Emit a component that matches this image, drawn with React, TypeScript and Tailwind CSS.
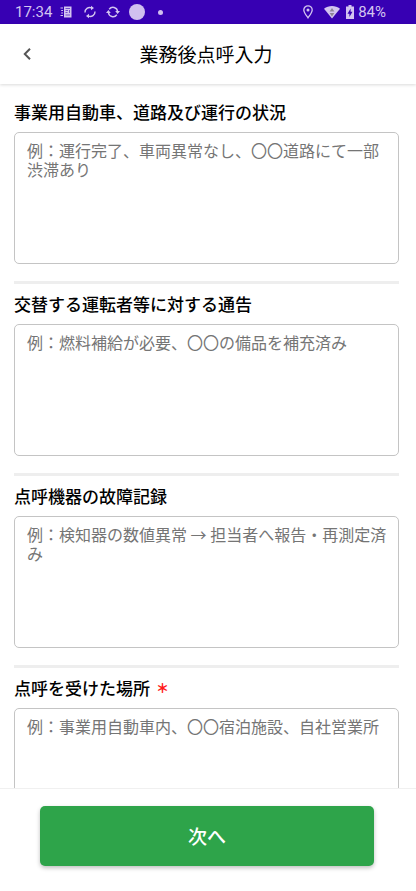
import React from "react";

type Field = {
  id: string;
  label: string;
  placeholder: string;
  required?: boolean;
};

const fields: Field[] = [
  {
    id: "condition",
    label: "事業用自動車、道路及び運行の状況",
    placeholder: "例：運行完了、車両異常なし、〇〇道路にて一部渋滞あり",
  },
  {
    id: "handover",
    label: "交替する運転者等に対する通告",
    placeholder: "例：燃料補給が必要、〇〇の備品を補充済み",
  },
  {
    id: "failure",
    label: "点呼機器の故障記録",
    placeholder: "例：検知器の数値異常 → 担当者へ報告・再測定済み",
  },
  {
    id: "place",
    label: "点呼を受けた場所",
    placeholder: "例：事業用自動車内、〇〇宿泊施設、自社営業所",
    required: true,
  },
];

const StatusBar: React.FC = () => (
  <div className="flex h-6 shrink-0 items-center bg-[#3700b3] pr-[30px] pl-[15px] font-[Roboto,sans-serif] text-[15px] text-[#d3c4f0]">
    <span>17:34</span>
    <svg className="ml-2 h-3 w-3" viewBox="0 0 12 12" fill="currentColor">
      <path d="M4 .5h7.500v11H4zM.5 1.500H3v1H.5zM1.200 4H3v1H1.200zM1.200 6.500H3v1H1.200zM.5 9H3v1H.5z" />
      <path d="M5.500 2.500H10M5.500 4.500H8M5.500 6.500H7.500M5.500 9H10M9.500 4v3" stroke="#3700b3" strokeWidth=".6" />
    </svg>
    <div className="ml-[11px] flex items-center gap-[9px]">
      {/* Sync, arrows at the right and left ends */}
      <svg className="h-[14px] w-[14px]" viewBox="0 0 14 14" fill="none" stroke="currentColor" strokeWidth="1.400">
        <path d="M2 7.500A4.700 4.700 0 0 1 8.500 2.900M12 6.500A4.700 4.700 0 0 1 5.500 11.100" />
        <path d="M8 .8v4.400L11 3zM6 13.200V8.800L3 11z" fill="currentColor" stroke="none" />
      </svg>
      <svg className="h-[14px] w-[14px]" viewBox="0 0 14 14" fill="none" stroke="currentColor" strokeWidth="1.400">
        <path d="M3.200 4.200A4.700 4.700 0 0 1 11.600 6.500M10.800 9.800A4.700 4.700 0 0 1 2.400 7.500" />
        <path d="M9.200 6h4.800l-2.400 3zM0 8h4.800L2.400 5z" fill="currentColor" stroke="none" />
      </svg>
      <span className="h-4 w-4 rounded-full bg-[#d0bfef]" />
    </div>
    <span className="ml-[13px] h-[5px] w-[5px] rounded-full bg-[#d0bfef]" />

    <div className="ml-auto flex items-center">
      <svg className="h-[14px] w-[10px]" viewBox="0 0 10 14" fill="none" stroke="currentColor" strokeWidth="1.300">
        <path d="M5 12.800C3 10 .8 7.500.8 5a4.200 4.200 0 0 1 8.400 0C9.200 7.500 7 10 5 12.800z" />
        <circle cx="5" cy="5" r="1.500" fill="currentColor" stroke="none" />
      </svg>
      <svg className="ml-[11px] h-[14px] w-4" viewBox="0 0 16 14">
        <path d="M0 3.800C4.500 0 11.500 0 16 3.800L8 13.500z" fill="currentColor" />
        <path d="M8 3l2.400 3.500H5.600zM8 11.500L5.600 8h4.800z" fill="#8d8495" />
      </svg>
      <svg className="ml-[6px] h-[14px] w-2" viewBox="0 0 8 14">
        <path d="M2.500 0h3v1.500H8V14H0V1.500h2.500z" fill="currentColor" />
        <path d="M4.600 3.500v3.300h1.900L3.400 12V8.700H1.500z" fill="#3700b3" />
      </svg>
      <span className="ml-1">84%</span>
    </div>
  </div>
);

const App: React.FC = () => {
  return (
    <div className="flex h-screen flex-col bg-white font-['Noto_Sans_CJK_JP',sans-serif] text-black">
      <StatusBar />

      {/* Header */}
      <header className="z-10 grid h-[60px] shrink-0 grid-cols-[48px_1fr_48px] items-center bg-white pr-1 shadow-[0_1px_3px_rgba(0,0,0,0.15)]">
        <button type="button" aria-label="戻る" className="flex h-full items-center justify-center pl-[6px]">
          <svg
            className="h-3 w-2"
            viewBox="0 0 8 12"
            fill="none"
            stroke="#555555"
            strokeWidth="2"
          >
            <path d="M7 .8L1.800 6 7 11.200" />
          </svg>
        </button>
        <h1 className="text-center text-[19px] leading-7">業務後点呼入力</h1>
      </header>

      {/* Form */}
      <main className="min-h-0 flex-1 overflow-y-auto pt-4 pr-[17px] pl-[14px] [scrollbar-width:none]">
        <form id="tenko">
          {fields.map((field) => (
            <div
              key={field.id}
              className="mb-2 border-b-[3px] border-[#eeeeee] pb-[17px] last:border-b-0"
            >
              <label htmlFor={field.id} className="mb-2 flex h-6 items-center text-[17px] leading-6 font-medium">
                {field.label}
                {field.required && <span className="ml-[6px] text-[13px] font-black text-[#ff1a1a]">＊</span>}
              </label>
              <textarea
                id={field.id}
                required={field.required}
                placeholder={field.placeholder}
                className="block h-[132px] w-full resize-none rounded-[5px] border border-[#c4c4c4] py-2 pr-2 pl-3 text-base leading-[19px] placeholder:text-[#757575]"
              />
            </div>
          ))}
        </form>
      </main>

      {/* Footer */}
      <footer className="shrink-0 border-t border-[#f0f0f0] bg-white pt-[17px] pr-[42px] pb-[25px] pl-10">
        <button
          type="submit"
          form="tenko"
          className="h-[60px] w-full rounded-[5px] bg-[#2ea44a] text-[19px] font-medium text-white shadow-[0_2px_4px_rgba(0,0,0,0.25)]"
        >
          次へ
        </button>
      </footer>
    </div>
  );
};

export default App;
